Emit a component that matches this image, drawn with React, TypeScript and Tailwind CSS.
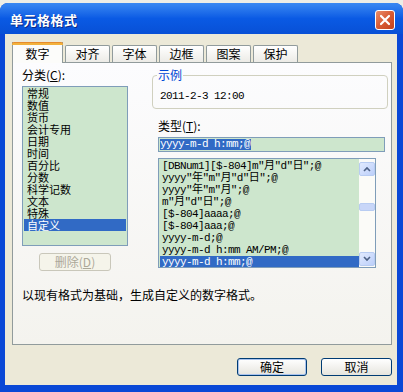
import React from 'react';

const categories = ['常规', '数值', '货币', '会计专用', '日期', '时间', '百分比', '分数', '科学记数', '文本', '特殊', '自定义'];

const formats = [
  '[DBNum1][$-804]m"月"d"日";@',
  'yyyy"年"m"月"d"日";@',
  'yyyy"年"m"月";@',
  'm"月"d"日";@',
  '[$-804]aaaa;@',
  '[$-804]aaa;@',
  'yyyy-m-d;@',
  'yyyy-m-d h:mm AM/PM;@',
  'yyyy-m-d h:mm;@',
];

const tabs = ['对齐', '字体', '边框', '图案', '保护'];

const Arrow = ({ up }: { up?: boolean }) => (
  <svg width="8" height="6" viewBox="0 0 8 6">
    <path
      d={up ? 'M1 5 L4 2 L7 5' : 'M1 1 L4 4 L7 1'}
      fill="none"
      stroke="#4d6185"
      strokeWidth="1.6"
    />
  </svg>
);

const mono = "font-['Liberation_Mono','Noto_Sans_CJK_SC',monospace] text-[11px] tracking-[-0.6px]";

export default function App() {
  return (
    <div className="w-[403px] h-[392px] pt-[3px] bg-[#eeede6] flex flex-col font-['Noto_Sans_CJK_SC',sans-serif] text-[12px] leading-[12px] text-black">
      <div className="flex-1 flex flex-col rounded-t-[8px] overflow-hidden bg-[#0a48d6]">
        {/* title bar */}
        <div className="h-[31px] pt-[3px] flex items-center justify-between pl-[10px] pr-[8px] bg-gradient-to-b from-[#3a88f2] via-[#0a5ae4] to-[#0850d6]">
          <span className="text-white font-bold text-[13px] leading-[14px] tracking-[0.5px] [text-shadow:1px_1px_0_#0a2a86]">单元格格式</span>
          <div className="w-[20px] h-[20px] rounded-[3px] border border-white bg-gradient-to-br from-[#e98d6b] via-[#d85a33] to-[#c2411c] flex items-center justify-center">
            <svg width="12" height="12" viewBox="0 0 12 12">
              <path d="M2 2 L10 10 M10 2 L2 10" stroke="white" strokeWidth="2.2" strokeLinecap="round" />
            </svg>
          </div>
        </div>

        <div className="flex-1 flex flex-col pl-[5px] pr-[6px] pb-[7px]">
          <div className="flex-1 flex flex-col bg-[#ece9d8] pt-[8px] pl-[7px] pr-[5px]">
            {/* tabs */}
            <div className="h-[20px] flex items-end relative z-10">
              <div className="w-[51px] h-[21px] -mb-[1px] border-x border-[#919b9c] bg-[#fcfcfa] flex flex-col">
                <div className="h-[3px] bg-[#f2b13c] border-t border-[#e68b2c] rounded-t-[2px] -mx-[1px]" />
                <div className="flex-1 flex items-center justify-center pb-[1px]">数字</div>
              </div>
              {tabs.map((t) => (
                <div
                  key={t}
                  className="w-[45px] h-[17px] ml-[2px] border border-b-0 border-[#919b9c] rounded-t-[2px] bg-gradient-to-b from-white to-[#ecebe6] flex items-center justify-center"
                >
                  {t}
                </div>
              ))}
            </div>

            {/* panel */}
            <div className="h-[283px] border border-[#919b9c] bg-gradient-to-b from-[#fcfcfe] to-[#f4f3ee] flex flex-col pt-[6px] pl-[9px] pr-[3px]">
              <div className="flex gap-[24px]">
                {/* left column */}
                <div className="w-[106px] flex flex-col">
                  <div className="h-[12px]">
                    分类(<span className="underline">C</span>):
                  </div>
                  <div className="mt-[5px] h-[160px] border border-[#7f9db9] bg-[#cde6cd] pl-[1px] pr-[1px] overflow-hidden text-[11px]">
                    {categories.map((c, i) => (
                      <div
                        key={c}
                        className={
                          'h-[12px] leading-[12px] pl-[3px] ' +
                          (i === categories.length - 1 ? 'bg-[#316ac5] text-white' : '')
                        }
                      >
                        {c}
                      </div>
                    ))}
                  </div>
                  <div className="mt-[7px] ml-[17px] w-[72px] h-[18px] rounded-[3px] border border-[#c9c7ba] bg-[#f5f4ea] text-[#aca899] flex items-center justify-center">
                    删除(<span className="underline">D</span>)
                  </div>
                </div>

                {/* right column */}
                <div className="w-[236px] flex flex-col">
                  <div className="relative mt-[6px] h-[34px] rounded-[4px] border border-[#d0d0bf] pl-[7px] pt-[12px]">
                    <span className="absolute -top-[7px] left-[4px] px-[1px] bg-[#fbfbfc] text-[#0046d5]">示例</span>
                    <span className={mono}>2011-2-3 12:00</span>
                  </div>
                  <div className="mt-[11px] h-[12px] pl-[6px]">
                    类型(<span className="underline">T</span>):
                  </div>
                  <div className="mt-[5px] ml-[6px] w-[227px] h-[15px] border border-[#7f9db9] bg-[#cde6cd] pl-[1px] flex items-center">
                    <span className={mono + ' bg-[#316ac5] text-white leading-[11px] pr-[1px]'}>yyyy-m-d h:mm;@</span>
                  </div>
                  <div className="mt-[6px] ml-[6px] w-[218px] h-[110px] border border-[#7f9db9] bg-[#cde6cd] flex">
                    <div className="flex-1 pl-[1px] pt-[1px] overflow-hidden">
                      {formats.map((f, i) => (
                        <div
                          key={f}
                          className={
                            mono +
                            ' h-[12px] leading-[12px] pl-[2px] whitespace-nowrap ' +
                            (i === formats.length - 1 ? 'bg-[#316ac5] text-white' : '')
                          }
                        >
                          {f}
                        </div>
                      ))}
                    </div>
                    <div className="w-[16px] bg-[#fbfbf8] flex flex-col pt-[3px] pb-[1px]">
                      <div className="h-[14px] rounded-[2px] border border-[#b8ccf2] bg-gradient-to-br from-[#e1eafe] to-[#bccffa] flex items-center justify-center">
                        <Arrow up />
                      </div>
                      <div className="h-[27px]" />
                      <div className="h-[8px] rounded-[2px] border border-[#b8ccf2] bg-[#c8d6f8]" />
                      <div className="flex-1" />
                      <div className="h-[14px] rounded-[2px] border border-[#b8ccf2] bg-gradient-to-br from-[#e1eafe] to-[#bccffa] flex items-center justify-center">
                        <Arrow />
                      </div>
                    </div>
                  </div>
                </div>
              </div>

              <div className="mt-[18px]">以现有格式为基础，生成自定义的数字格式。</div>
            </div>

            {/* buttons */}
            <div className="mt-[13px] flex justify-end gap-[14px]">
              <div className="w-[70px] h-[18px] rounded-[3px] border border-[#003c74] bg-gradient-to-b from-white to-[#e6e5de] shadow-[inset_0_0_0_1px_#a9c3ee] flex items-center justify-center">
                确定
              </div>
              <div className="w-[71px] h-[18px] rounded-[3px] border border-[#003c74] bg-gradient-to-b from-white to-[#e6e5de] flex items-center justify-center">
                取消
              </div>
            </div>
          </div>
        </div>
      </div>
    </div>
  );
}
